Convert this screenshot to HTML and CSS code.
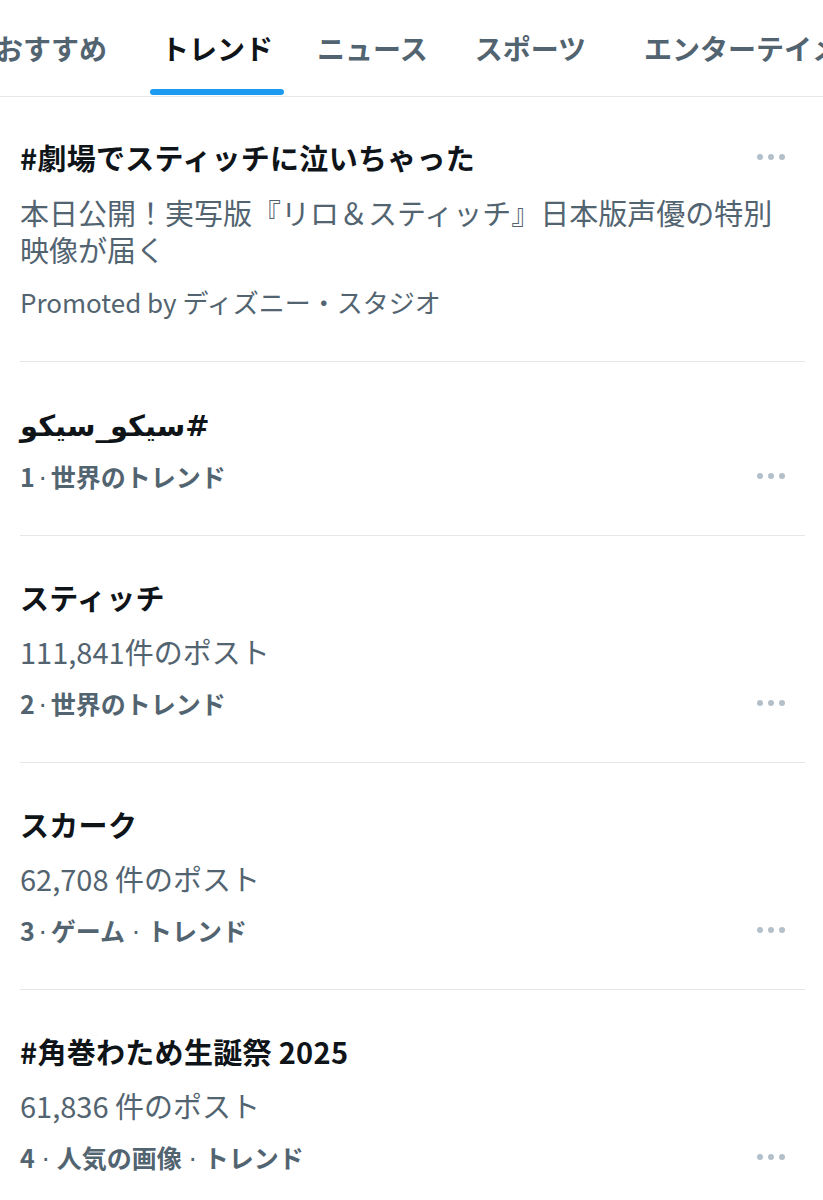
FILE: index.html
```html
<!DOCTYPE html>
<html lang="ja">
<head>
    <meta charset="UTF-8">
    <meta name="viewport" content="width=device-width, initial-scale=1.0">
    <title>トレンド</title>
    <link rel="stylesheet" href="styles.css">
</head>
<body>
    <nav class="tabs">
        <div class="tab">おすすめ</div>
        <div class="tab active">トレンド</div>
        <div class="tab">ニュース</div>
        <div class="tab">スポーツ</div>
        <div class="tab">エンターテイメント</div>
    </nav>

    <div class="trend-list">
        <div class="trend">
            <div class="trend-row">
                <div class="trend-title">#劇場でスティッチに泣いちゃった</div>
                <div class="more"><span></span><span></span><span></span></div>
            </div>
            <div class="trend-desc">本日公開！実写版『リロ＆スティッチ』日本版声優の特別映像が届く</div>
            <div class="trend-promo">Promoted by ディズニー・スタジオ</div>
        </div>

        <div class="trend">
            <div class="trend-title"><bdi>#سيكو_سيكو</bdi></div>
            <div class="trend-row meta-row">
                <div class="trend-meta">1<span class="sep">·</span>世界のトレンド</div>
                <div class="more"><span></span><span></span><span></span></div>
            </div>
        </div>

        <div class="trend">
            <div class="trend-title">スティッチ</div>
            <div class="trend-count">111,841件のポスト</div>
            <div class="trend-row meta-row">
                <div class="trend-meta">2<span class="sep">·</span>世界のトレンド</div>
                <div class="more"><span></span><span></span><span></span></div>
            </div>
        </div>

        <div class="trend">
            <div class="trend-title">スカーク</div>
            <div class="trend-count">62,708 件のポスト</div>
            <div class="trend-row meta-row">
                <div class="trend-meta">3<span class="sep">·</span>ゲーム<span class="sep wide">·</span>トレンド</div>
                <div class="more"><span></span><span></span><span></span></div>
            </div>
        </div>

        <div class="trend">
            <div class="trend-title">#角巻わため生誕祭 2025</div>
            <div class="trend-count">61,836 件のポスト</div>
            <div class="trend-row meta-row">
                <div class="trend-meta">4<span class="sep wide">·</span>人気の画像<span class="sep wide">·</span>トレンド</div>
                <div class="more"><span></span><span></span><span></span></div>
            </div>
        </div>
    </div>
</body>
</html>
```

FILE: styles.css
```css
body {
    margin: 0;
    background-color: #fff;
    font-family: "Noto Sans CJK JP", "DejaVu Sans", sans-serif;
    color: #0f1419;
    overflow: hidden;
}
.tabs {
    display: flex;
    gap: 22px;
    height: 96px;
    margin-left: -16px;
    border-bottom: 1px solid #e3e7ea;
    white-space: nowrap;
    overflow: hidden;
}
.tab {
    position: relative;
    padding: 0 11px;
    font-size: 28px;
    font-weight: bold;
    line-height: 96px;
    color: #536471;
    flex-shrink: 0;
}
.tab.active {
    color: #0f1419;
    margin-left: 10px;
}
.tab:nth-child(4) {
    margin-left: 3px;
}
.tab:last-child {
    margin-left: 14px;
}
.tab.active::after {
    content: "";
    position: absolute;
    left: 0;
    right: 0;
    bottom: 1px;
    height: 6px;
    border-radius: 3px;
    background-color: #1d9bf0;
}
.trend-list {
    margin: 0 18px 0 20px;
}
.trend {
    padding: 41px 0 42px;
    border-bottom: 1px solid #e3e7ea;
}
.trend:first-child {
    padding-top: 40px;
}
.trend-row {
    display: flex;
    align-items: center;
    justify-content: space-between;
}
.trend-title {
    height: 40px;
    font-size: 29px;
    font-weight: bold;
    line-height: 40px;
    letter-spacing: 0.3px;
}
.trend-title bdi {
    font-family: "DejaVu Sans", sans-serif;
    letter-spacing: 0;
}
.trend-desc {
    margin-top: 17px;
    padding-right: 20px;
    font-size: 29px;
    line-height: 37px;
    color: #536471;
}
.trend-promo {
    margin-top: 17px;
    font-size: 26px;
    line-height: 34px;
    color: #536471;
}
.trend-count {
    margin-top: 16px;
    font-size: 29px;
    line-height: 37px;
    color: #536471;
}
.meta-row {
    margin-top: 16px;
}
.trend-meta {
    height: 34px;
    font-size: 25px;
    font-weight: bold;
    line-height: 34px;
    color: #536471;
}
.sep {
    margin: 0 4px;
    font-family: "DejaVu Sans", sans-serif;
    font-weight: normal;
    line-height: 1;
}
.sep.wide {
    margin: 0 7px;
}
.more {
    display: flex;
    gap: 5px;
    margin-right: 20px;
}
.more span {
    width: 6px;
    height: 6px;
    border-radius: 50%;
    background-color: #b4c0c9;
}
```
